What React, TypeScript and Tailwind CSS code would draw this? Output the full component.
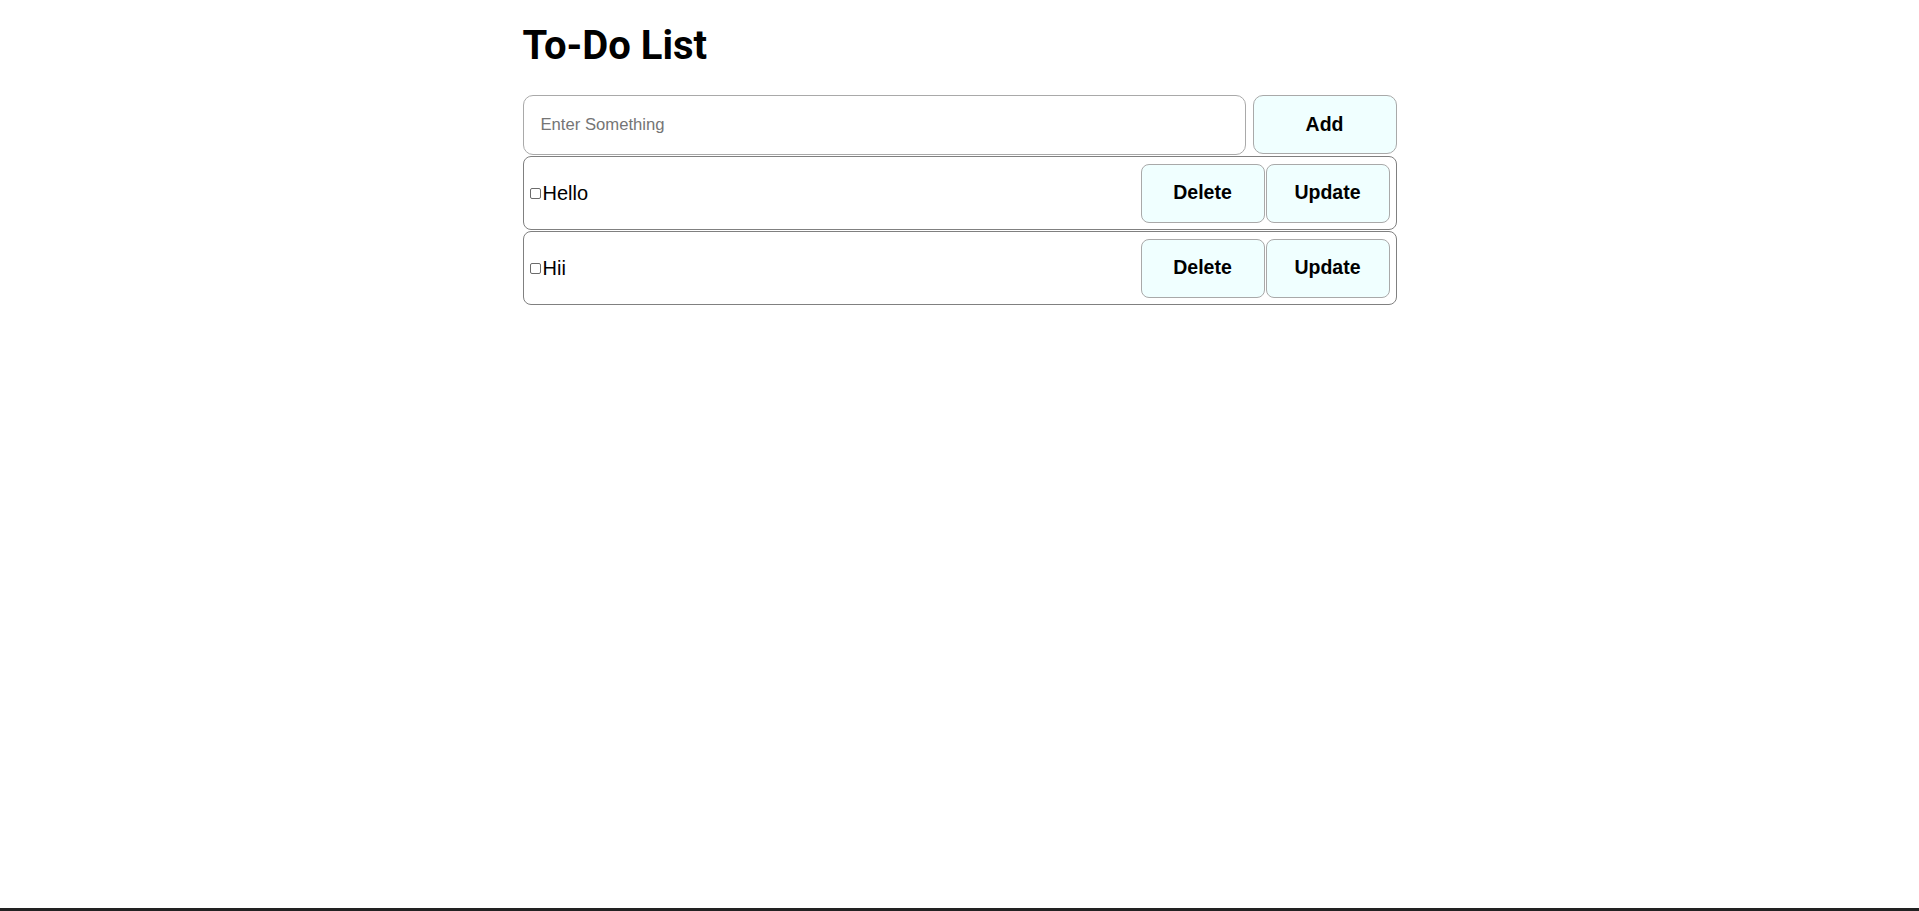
import { useState } from "react";

type Todo = {
  id: number;
  text: string;
  done: boolean;
};

const initialTodos: Todo[] = [
  { id: 1, text: "Hello", done: false },
  { id: 2, text: "Hii", done: false },
];

export default function App() {
  const [todos, setTodos] = useState<Todo[]>(initialTodos);
  const [value, setValue] = useState<string>("");

  const addTodo = () => {
    const text = value.trim();
    if (!text) {
      return;
    }
    setTodos((prev) => [...prev, { id: Date.now(), text, done: false }]);
    setValue("");
  };

  const toggleTodo = (id: number) => {
    setTodos((prev) => prev.map((todo) => (todo.id === id ? { ...todo, done: !todo.done } : todo)));
  };

  const deleteTodo = (id: number) => {
    setTodos((prev) => prev.filter((todo) => todo.id !== id));
  };

  const updateTodo = (id: number) => {
    const text = value.trim();
    if (!text) {
      return;
    }
    setTodos((prev) => prev.map((todo) => (todo.id === id ? { ...todo, text } : todo)));
    setValue("");
  };

  return (
    <div className="flex min-h-screen flex-col bg-white font-['Liberation_Sans',Arial,sans-serif] text-black">
      <main className="mx-auto w-[874px] pt-[22px]">
        <h1 className="mb-[26px] font-['Roboto',sans-serif] text-[40px] font-bold leading-[47px]">To-Do List</h1>

        <div className="flex h-[60px] gap-[7px]">
          <input
            type="text"
            value={value}
            onChange={(e) => setValue(e.target.value)}
            placeholder="Enter Something"
            className="h-full flex-1 rounded-[10px] border border-[#a9a9a9] px-[17px] text-[16.67px] outline-none placeholder:text-[#757575]"
          />
          <button
            type="button"
            onClick={addTodo}
            className="h-[59px] w-[144px] rounded-[10px] border border-[#a9a9a9] bg-[#f0ffff] text-[19.5px] font-bold"
          >
            Add
          </button>
        </div>

        <ul className="mt-[1px] flex flex-col gap-[1px]">
          {todos.map((todo) => (
            <li
              key={todo.id}
              className="flex h-[74px] items-center rounded-[8px] border border-[#808080] pl-[6px] pr-[6px]"
            >
              <input
                type="checkbox"
                checked={todo.done}
                onChange={() => toggleTodo(todo.id)}
                className="mr-[2px] h-[11px] w-[11px] appearance-none rounded-[2px] border border-[#6b6b6b] bg-white checked:bg-[#0075ff]"
              />
              <span className={`text-[20px] ${todo.done ? "line-through" : ""}`}>{todo.text}</span>
              <div className="ml-auto flex gap-[1px]">
                <button
                  type="button"
                  onClick={() => deleteTodo(todo.id)}
                  className="h-[59px] w-[124px] rounded-[8px] border border-[#a9a9a9] bg-[#f0ffff] text-[19.5px] font-bold"
                >
                  Delete
                </button>
                <button
                  type="button"
                  onClick={() => updateTodo(todo.id)}
                  className="h-[59px] w-[124px] rounded-[8px] border border-[#a9a9a9] bg-[#f0ffff] text-[19.5px] font-bold"
                >
                  Update
                </button>
              </div>
            </li>
          ))}
        </ul>
      </main>

      <div className="mt-auto h-[3px] w-full bg-[#222222]" />
    </div>
  );
}
